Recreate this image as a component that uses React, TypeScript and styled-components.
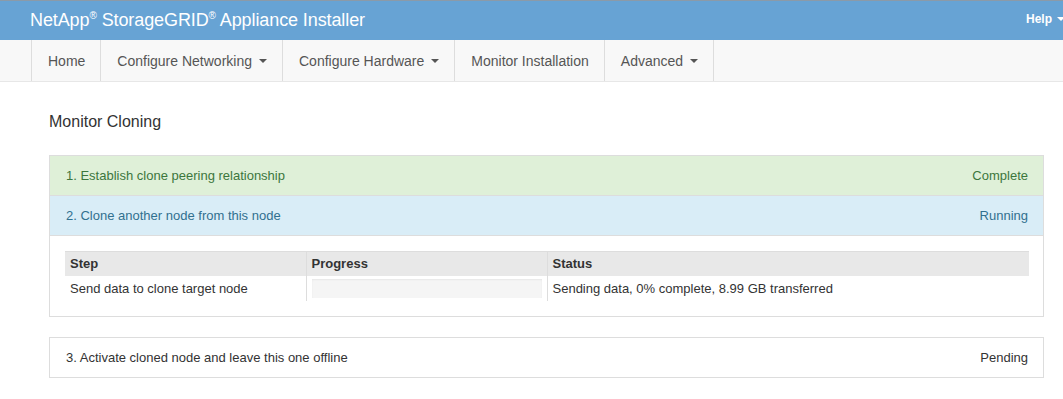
import React from 'react';
import styled, { createGlobalStyle } from 'styled-components';

let GlobalStyle = createGlobalStyle`
  body {
    margin: 0;
    font-family: "Liberation Sans", Arial, sans-serif;
    font-size: 13px;
    color: #333;
    background: #fff;
  }
`;

// ---------
// HEADER
// ---------

let TopBar = styled.header`
  height: 39px;
  border-top: 1px solid #8b9aa8;
  background: #67a3d4;
  color: #fff;
  display: flex;
  align-items: center;
  justify-content: space-between;
  padding: 0 0 0 30px;
  overflow: hidden;
`;

let Brand = styled.div`
  font-size: 18px;
  letter-spacing: -0.1px;

  sup {
    font-size: 10px;
    line-height: 0;
    vertical-align: 7px;
  }
`;

let HelpMenu = styled.div`
  font-size: 12px;
  font-weight: 700;
  display: flex;
  align-items: center;
  margin-right: -2px;
  padding-bottom: 3px;
`;

let Caret = styled.span<{ light?: boolean }>`
  display: inline-block;
  width: 0;
  height: 0;
  margin-left: ${({ light }) => (light ? '5px' : '7px')};
  border-top: 4px solid ${({ light }) => (light ? '#fff' : '#555')};
  border-left: 4px solid transparent;
  border-right: 4px solid transparent;
`;

// ---------
// NAV
// ---------

let NavBar = styled.nav`
  height: 41px;
  background: #f8f8f8;
  border-bottom: 1px solid #e7e7e7;
  padding-left: 31px;
  display: flex;
`;

let NavList = styled.ul`
  list-style: none;
  margin: 0;
  padding: 0;
  display: flex;
  border-left: 1px solid #ddd;
`;

let NavItem = styled.li`
  display: flex;
  align-items: center;
  padding: 1px 15px 0 16px;
  border-right: 1px solid #ddd;
  font-size: 14px;
  color: #555;
`;

let navItems = [
  { label: 'Home', menu: false },
  { label: 'Configure Networking', menu: true },
  { label: 'Configure Hardware', menu: true },
  { label: 'Monitor Installation', menu: false },
  { label: 'Advanced', menu: true },
];

// ---------
// CONTENT
// ---------

let Content = styled.main`
  padding: 30px 19px 0 49px;
`;

let Heading = styled.h1`
  margin: 0 0 23px;
  font-size: 16px;
  font-weight: 400;
  line-height: 20px;
  color: #333;
`;

let Panel = styled.section`
  border: 1px solid #ddd;
  margin-bottom: 20px;
  background: #fff;
`;

let tones = {
  success: { bg: '#dff0d8', fg: '#3c763d' },
  info: { bg: '#d9edf7', fg: '#31708f' },
  plain: { bg: '#fff', fg: '#333' },
};

type Tone = keyof typeof tones;

let StepRow = styled.div<{ tone: Tone }>`
  height: 39px;
  padding: 0 15px 0 16px;
  display: flex;
  align-items: center;
  justify-content: space-between;
  background: ${({ tone }) => tones[tone].bg};
  color: ${({ tone }) => tones[tone].fg};
  & + & {
    border-top: 1px solid #ddd;
  }
`;

let PanelBody = styled.div`
  border-top: 1px solid #ddd;
  padding: 15px 14px 15px 15px;
`;

let Table = styled.table`
  width: 100%;
  border-collapse: collapse;
  table-layout: fixed;
`;

let Th = styled.th<{ w: string }>`
  box-sizing: border-box;
  width: ${({ w }) => w};
  height: 24px;
  padding: 0 5px;
  text-align: left;
  font-weight: 700;
  background: #e8e8e8;
  border-top: 1px solid #ddd;
  & + & {
    border-left: 1px solid #ddd;
  }
`;

let Td = styled.td`
  height: 25px;
  padding: 0 5px;
  & + & {
    border-left: 1px solid #ddd;
  }
`;

let ProgressTrack = styled.div`
  height: 19px;
  background: #f5f5f5;
  box-shadow: inset 0 1px 2px rgba(0, 0, 0, 0.06);
`;

let ProgressFill = styled.div`
  height: 100%;
  background: #337ab7;
`;

let steps: { label: string; status: string; tone: Tone }[] = [
  { label: '1. Establish clone peering relationship', status: 'Complete', tone: 'success' },
  { label: '2. Clone another node from this node', status: 'Running', tone: 'info' },
];

export default function App() {
  let percent = 0;

  return (
    <React.Fragment>
      <GlobalStyle />
      <TopBar>
        <Brand>
          NetApp<sup>®</sup> StorageGRID<sup>®</sup> Appliance Installer
        </Brand>
        <HelpMenu>
          Help <Caret light />
        </HelpMenu>
      </TopBar>
      <NavBar>
        <NavList>
          {navItems.map((item) => (
            <NavItem key={item.label}>
              {item.label}
              {item.menu && <Caret />}
            </NavItem>
          ))}
        </NavList>
      </NavBar>
      <Content>
        <Heading>Monitor Cloning</Heading>
        <Panel>
          {steps.map((step) => (
            <StepRow key={step.label} tone={step.tone}>
              <span>{step.label}</span>
              <span>{step.status}</span>
            </StepRow>
          ))}
          <PanelBody>
            <Table>
              <thead>
                <tr>
                  <Th w="25%">Step</Th>
                  <Th w="25%">Progress</Th>
                  <Th w="50%">Status</Th>
                </tr>
              </thead>
              <tbody>
                <tr>
                  <Td>Send data to clone target node</Td>
                  <Td>
                    <ProgressTrack>
                      <ProgressFill style={{ width: `${percent}%` }} />
                    </ProgressTrack>
                  </Td>
                  <Td>Sending data, 0% complete, 8.99 GB transferred</Td>
                </tr>
              </tbody>
            </Table>
          </PanelBody>
        </Panel>
        <Panel>
          <StepRow tone="plain">
            <span>3. Activate cloned node and leave this one offline</span>
            <span>Pending</span>
          </StepRow>
        </Panel>
      </Content>
    </React.Fragment>
  );
}
